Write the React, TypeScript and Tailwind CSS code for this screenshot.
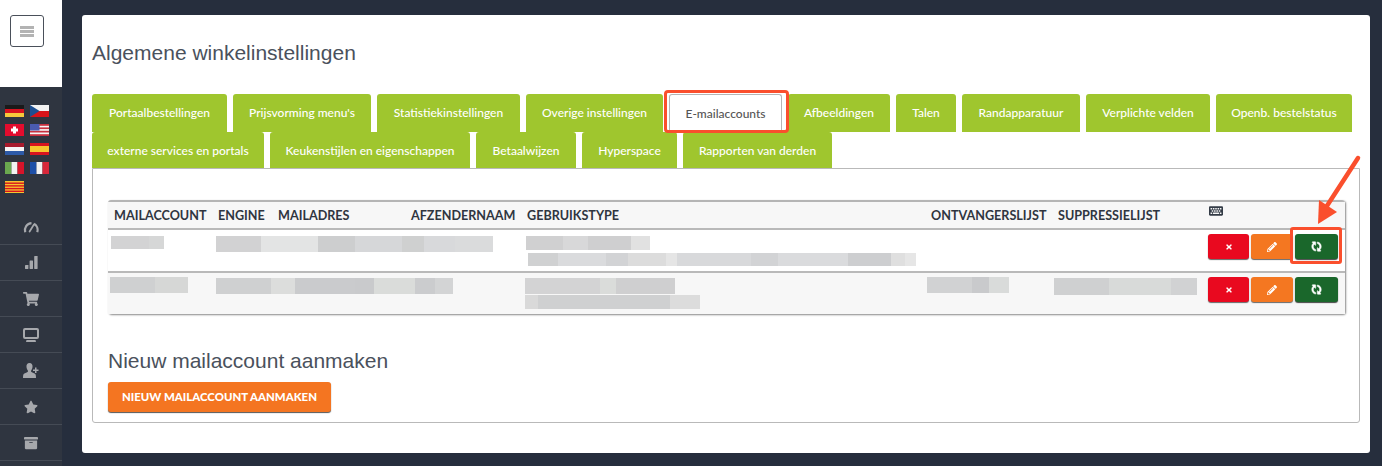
import React from "react";
import { FaShoppingCart, FaStar, FaArchive, FaTimes, FaPencilAlt, FaKeyboard } from "react-icons/fa";

const Flag = ({ children }: { children: React.ReactNode }) => (
  <svg width="19" height="12" viewBox="0 0 19 12" className="block">{children}</svg>
);

const flags = [
  <Flag key="de"><rect width="19" height="4" fill="#1a1a1a" /><rect y="4" width="19" height="4" fill="#d8121f" /><rect y="8" width="19" height="4" fill="#f6c93c" /></Flag>,
  <Flag key="cz"><rect width="19" height="6" fill="#f2f2f2" /><rect y="6" width="19" height="6" fill="#d7141a" /><path d="M0 0L9.5 6L0 12Z" fill="#1d4f91" /></Flag>,
  <Flag key="ch"><rect width="19" height="12" fill="#e30c2e" /><rect x="8" y="2.5" width="3" height="7" fill="#fff" /><rect x="6" y="4.5" width="7" height="3" fill="#fff" /></Flag>,
  <Flag key="us"><rect width="19" height="12" fill="#f5f5f5" /><rect width="19" height="1.8" fill="#c8303f" /><rect y="3.4" width="19" height="1.7" fill="#c8303f" /><rect y="6.8" width="19" height="1.7" fill="#c8303f" /><rect y="10.2" width="19" height="1.8" fill="#c8303f" /><rect width="9.5" height="6.5" fill="#4a5bb0" /></Flag>,
  <Flag key="nl"><rect width="19" height="4" fill="#a81b2d" /><rect y="4" width="19" height="4" fill="#f5f5f5" /><rect y="8" width="19" height="5" fill="#2d5aa8" /></Flag>,
  <Flag key="es"><rect width="19" height="12" fill="#d8141f" /><rect y="3" width="19" height="6" fill="#f6c52e" /></Flag>,
  <Flag key="it"><rect width="6.5" height="12" fill="#6aa84f" /><rect x="6.5" width="6" height="12" fill="#f2f2f2" /><rect x="12.5" width="6.5" height="12" fill="#d7142a" /></Flag>,
  <Flag key="fr"><rect width="6.5" height="12" fill="#1d4fa8" /><rect x="6.5" width="6" height="12" fill="#f2f2f2" /><rect x="12.5" width="6.5" height="12" fill="#d7273a" /></Flag>,
  <Flag key="ca"><rect width="19" height="13" fill="#f6c52e" /><rect y="1.5" width="19" height="1.4" fill="#d8141f" /><rect y="4.2" width="19" height="1.4" fill="#d8141f" /><rect y="6.9" width="19" height="1.4" fill="#d8141f" /><rect y="9.6" width="19" height="1.4" fill="#d8141f" /></Flag>,
];

const Gauge = () => (
  <svg width="16" height="12" viewBox="0 0 16 12" fill="none" stroke="currentColor">
    <path d="M2.2 11.2A7 7 0 0 1 8.5 2.2" strokeWidth="2.2" />
    <path d="M11 2.8A7 7 0 0 1 14.2 11.2" strokeWidth="2.2" />
    <path d="M6.6 10.5L11 3.4" strokeWidth="1.8" strokeLinecap="round" />
  </svg>
);
const Bars = () => (
  <svg width="13" height="13" viewBox="0 0 13 13" fill="currentColor">
    <rect x="0" y="9" width="3.4" height="4" rx="0.4" />
    <rect x="4.6" y="4.5" width="3.4" height="8.5" rx="0.4" />
    <rect x="9.2" y="0" width="3.4" height="13" rx="0.4" />
  </svg>
);
const Monitor = () => (
  <svg width="16" height="14" viewBox="0 0 16 14" fill="currentColor">
    <path fillRule="evenodd" d="M2 0H14A2 2 0 0 1 16 2V9A2 2 0 0 1 14 11H2A2 2 0 0 1 0 9V2A2 2 0 0 1 2 0ZM2.5 2A.5.5 0 0 0 2 2.5V8.5A.5.5 0 0 0 2.500 9H13.500A.5.5 0 0 0 14 8.500V2.500A.5.5 0 0 0 13.500 2Z" />
    <path d="M3.500 12H12.500L13 14H3Z" />
  </svg>
);
const UserAdd = () => (
  <svg width="16" height="15" viewBox="0 0 16 15" fill="currentColor">
    <path d="M6.500 0C8.800 0 9.800 1.700 9.500 4C9.300 5.700 8.700 6.800 8.100 7.500V8.800C9 9.600 10.800 9.900 12 10.700C12.800 11.300 13 12.500 13 15H0C0 12.500 .2 11.300 1 10.700C2.200 9.900 4 9.600 4.900 8.800V7.500C4.300 6.800 3.700 5.700 3.500 4C3.200 1.700 4.200 0 6.500 0Z" />
    <path d="M12 4.500H13.500V6.500H15.500V8H13.500V10H12V8H10V6.500H12Z" />
  </svg>
);
const Sync = () => (
  <svg width="11" height="11" viewBox="0 0 1792 1792" fill="currentColor" stroke="currentColor" strokeWidth="90" className="-rotate-90">
    <path d="M1639 1056q0 5-1 7-64 268-268 434.500t-478 166.500q-146 0-282.500-55t-243.500-157l-129 129q-19 19-45 19t-45-19-19-45v-448q0-26 19-45t45-19h448q26 0 45 19t19 45-19 45l-137 137q71 66 161 102t187 36q134 0 250-65t186-179q11-17 53-117 8-23 30-23h192q13 0 22.500 9.500t9.500 22.500zm25-800v448q0 26-19 45t-45 19h-448q-26 0-45-19t-19-45 19-45l138-138q-148-137-349-137-134 0-250 65t-186 179q-11 17-53 117-8 23-30 23h-199q-13 0-22.500-9.500t-9.500-22.500v-7q65-268 270-434.500t480-166.500q146 0 284 55.500t245 156.500l130-129q19-19 45-19t45 19 19 45z" />
  </svg>
);

const navIcons = [
  <Gauge key="a" />,
  <Bars key="b" />,
  <FaShoppingCart key="c" className="text-[16px]" />,
  <Monitor key="d" />,
  <UserAdd key="e" />,
  <FaStar key="f" className="text-[14px]" />,
  <FaArchive key="g" className="text-[14px]" />,
];

const row1: [string, string][] = [
  ["Portaalbestellingen", "w-[135px]"],
  ["Prijsvorming menu's", "w-[138px]"],
  ["Statistiekinstellingen", "w-[143px]"],
  ["Overige instellingen", "w-[137px]"],
  ["E-mailaccounts", "w-[113px]"],
  ["Afbeeldingen", "w-[102px]"],
  ["Talen", "w-[60px]"],
  ["Randapparatuur", "w-[118px]"],
  ["Verplichte velden", "w-[124px]"],
  ["Openb. bestelstatus", "w-[136px]"],
];
const row2: [string, string][] = [
  ["externe services en portals", "w-[172px]"],
  ["Keukenstijlen en eigenschappen", "w-[200px]"],
  ["Betaalwijzen", "w-[100px]"],
  ["Hyperspace", "w-[95px]"],
  ["Rapporten van derden", "w-[149px]"],
];

const Tab = ({ label, w }: { label: string; w: string }) => {
  if (label === "E-mailaccounts") {
    return (
      <div className={`relative h-[38px] ${w} rounded-t-[3px] border border-b-0 border-[#b5b5b5] bg-white pt-[12px] text-center whitespace-nowrap text-[#555]`}>
        {label}
        <div className="absolute -left-[6px] -right-[8px] -top-[5px] -bottom-[1px] rounded-[4px] border-[3px] border-[#fa4f2d]" />
      </div>
    );
  }
  return <div className={`h-[38px] ${w} rounded-t-[3px] bg-[#9fc62e] pt-[12px] text-center whitespace-nowrap text-white`}>{label}</div>;
};

const Blur = ({ cls, segs }: { cls: string; segs: [string, number][] }) => (
  <div className={`flex ${cls}`}>
    {segs.map(([c, w], i) => (
      <div key={i} className="h-full" style={{ backgroundColor: c, flexGrow: w }} />
    ))}
  </div>
);

const Actions = () => (
  <div className="flex gap-[2px] pl-[6px]">
    <button className="flex h-[25px] w-[41px] items-center justify-center rounded-[3px] bg-[#e9091f] text-[8px] text-white shadow-[0_1px_1px_#666]"><FaTimes /></button>
    <button className="flex h-[25px] w-[42px] items-center justify-center rounded-[3px] bg-[#f47721] text-[10px] text-white shadow-[0_1px_1px_#666]"><FaPencilAlt /></button>
    <button className="flex h-[25px] w-[43px] items-center justify-center rounded-[3px] bg-[#1a672b] text-white shadow-[0_1px_1px_#444]"><Sync /></button>
  </div>
);

const cols = "grid grid-cols-[104px_60px_133px_116px_404px_127px_150px_143px]";
const th = "pl-[6px] pt-[7px] whitespace-nowrap";

export default function App() {
  return (
    <div className="relative flex h-[466px] w-[1382px] overflow-hidden bg-[#262e3d] font-['Lato',sans-serif]">
      <aside className="flex w-[62px] shrink-0 flex-col bg-[#2f3540]">
        <div className="h-[87px] bg-white pl-[10px] pt-[15px]">
          <button className="flex h-[32px] w-[34px] flex-col items-center justify-center gap-[1px] rounded-[3px] border border-[#4a505a]">
            <span className="h-[3px] w-[14px] bg-[#b3b3b3]" />
            <span className="h-[3px] w-[14px] bg-[#b3b3b3]" />
            <span className="h-[3px] w-[14px] bg-[#b3b3b3]" />
          </button>
        </div>
        <div className="grid grid-cols-[19px_19px] gap-x-[6px] gap-y-[7px] pl-[5px] pt-[18px]">{flags}</div>
        <div className="mt-[16px] flex flex-col">
          {navIcons.map((icon, i) => (
            <div key={i} className="flex h-[36px] items-center justify-center border-b border-[#454b55] text-[#a6a8ac]">{icon}</div>
          ))}
        </div>
      </aside>

      <main className="flex-1 pb-[13px] pl-[20px] pr-[12px] pt-[15px]">
        <div className="h-[438px] rounded-[3px] bg-white pl-[10px] pr-[10px]">
          <h1 className="pt-[25px] font-['Liberation_Sans',sans-serif] text-[21px] leading-[26px] text-[#4a515c]">Algemene winkelinstellingen</h1>
          <div className="mt-[28px] text-[12px] font-medium leading-[14px]">
            <div className="flex gap-[6px]">{row1.map(([t, w]) => <Tab key={t} label={t} w={w} />)}</div>
            <div className="flex h-[36px] gap-[6px] overflow-hidden">{row2.map(([t, w]) => <Tab key={t} label={t} w={w} />)}</div>
          </div>
          <div className="h-[255px] rounded-b-[3px] border border-[#b9b9b9] pl-[15px] pr-[14px] pt-[31px]">
            <div className="h-[114px] w-[1237px] rounded-[3px] border-t-2 border-[#b5b5b5] shadow-[1px_1px_2px_#888]">
              <div className={`${cols} h-[26px] bg-[#f7f7f7] text-[12.6px] font-bold leading-[14px] text-[#2f3540]`}>
                <div className={th}>MAILACCOUNT</div>
                <div className={th}>ENGINE</div>
                <div className={th}>MAILADRES</div>
                <div className={th}>AFZENDERNAAM</div>
                <div className={th}>GEBRUIKSTYPE</div>
                <div className={th}>ONTVANGERSLIJST</div>
                <div className={th}>SUPPRESSIELIJST</div>
                <div className="pl-[7px] pt-[2px] text-[14px] text-[#333b46]"><FaKeyboard /></div>
              </div>
              <div className={`${cols} h-[43px] border-t-2 border-[#b9b9b9] bg-white`}>
                <div className="pl-[3px] pt-[6px]"><Blur cls="h-[13px] w-[53px]" segs={[["#d3d3d4", 38], ["#d6d7d7", 15]]} /></div>
                <div className="col-span-3 pl-[4px] pt-[6px]"><Blur cls="h-[16px] w-[277px]" segs={[["#d2d2d3", 45], ["#e3e4e4", 57], ["#cdcecf", 37], ["#d6d7d9", 47], ["#cfd0d0", 22], ["#d8d9db", 31], ["#dadbdc", 38]]} /></div>
                <div className="pl-[5px] pt-[6px]">
                  <Blur cls="h-[14px] w-[124px]" segs={[["#d0d0d1", 37], ["#d8d8d9", 25], ["#cfcfd0", 43], ["#e1e1e1", 19]]} />
                  <Blur cls="mt-[3px] ml-[2px] h-[13px] w-[388px]" segs={[["#d0d1d2", 30], ["#dadbdd", 48], ["#d2d3d5", 22], ["#dcdcdc", 38], ["#e5e5e5", 11], ["#d8d9db", 73], ["#d2d3d5", 27], ["#dadbdd", 70], ["#cdced0", 43], ["#dfdfdf", 14], ["#e6e6e6", 11]]} />
                </div>
                <div />
                <div />
                <div className="pt-[4px]"><Actions /></div>
              </div>
              <div className={`${cols} h-[43px] border-t-2 border-[#b9b9b9] bg-[#f7f7f7]`}>
                <div className="pl-[2px] pt-[4px]"><Blur cls="h-[16px] w-[78px]" segs={[["#cfd0d1", 45], ["#d6d7d6", 33]]} /></div>
                <div className="col-span-3 pl-[4px] pt-[5px]"><Blur cls="h-[16px] w-[237px]" segs={[["#cfd0d1", 55], ["#dcdddc", 24], ["#cacbcd", 60], ["#c9cacc", 19], ["#dadcda", 41], ["#cbccce", 20], ["#d3d4d5", 18]]} /></div>
                <div className="pl-[4px] pt-[5px]">
                  <Blur cls="h-[16px] w-[150px]" segs={[["#d3d3d4", 75], ["#dadcda", 16], ["#cfcfd0", 59]]} />
                  <Blur cls="mt-[1px] h-[14px] w-[175px]" segs={[["#d9d9d9", 13], ["#cfd0d1", 133], ["#dcdcdc", 30]]} />
                </div>
                <div className="pl-[2px] pt-[4px]"><Blur cls="h-[16px] w-[82px]" segs={[["#d1d2d3", 45], ["#c9cacc", 17], ["#d9dbda", 20]]} /></div>
                <div className="pl-[2px] pt-[5px]"><Blur cls="h-[17px] w-[143px]" segs={[["#cfd0d1", 55], ["#d8dad9", 62], ["#d1d2d3", 26]]} /></div>
                <div className="pt-[4px]"><Actions /></div>
              </div>
            </div>
            <h2 className="mt-[34px] font-['Liberation_Sans',sans-serif] text-[21px] leading-[26px] text-[#4a515c]">Nieuw mailaccount aanmaken</h2>
            <button className="mt-[8px] h-[30px] w-[223px] rounded-[3px] bg-[#f47521] text-[11.4px] font-black uppercase text-white shadow-[0_1px_1px_#555]">Nieuw mailaccount aanmaken</button>
          </div>
        </div>
      </main>

      <div className="absolute left-[1290px] top-[227px] h-[37px] w-[52px] rounded-[3px] border-[3px] border-[#fa4f2d]" />
      <svg className="absolute left-[1310px] top-[150px]" width="56" height="80" viewBox="0 0 56 80">
        <path d="M48 8L13 62" stroke="#fa4f2d" strokeWidth="4.5" strokeLinecap="round" fill="none" />
        <path d="M8 74L9 50L27 62Z" fill="#fa4f2d" />
      </svg>
    </div>
  );
}
